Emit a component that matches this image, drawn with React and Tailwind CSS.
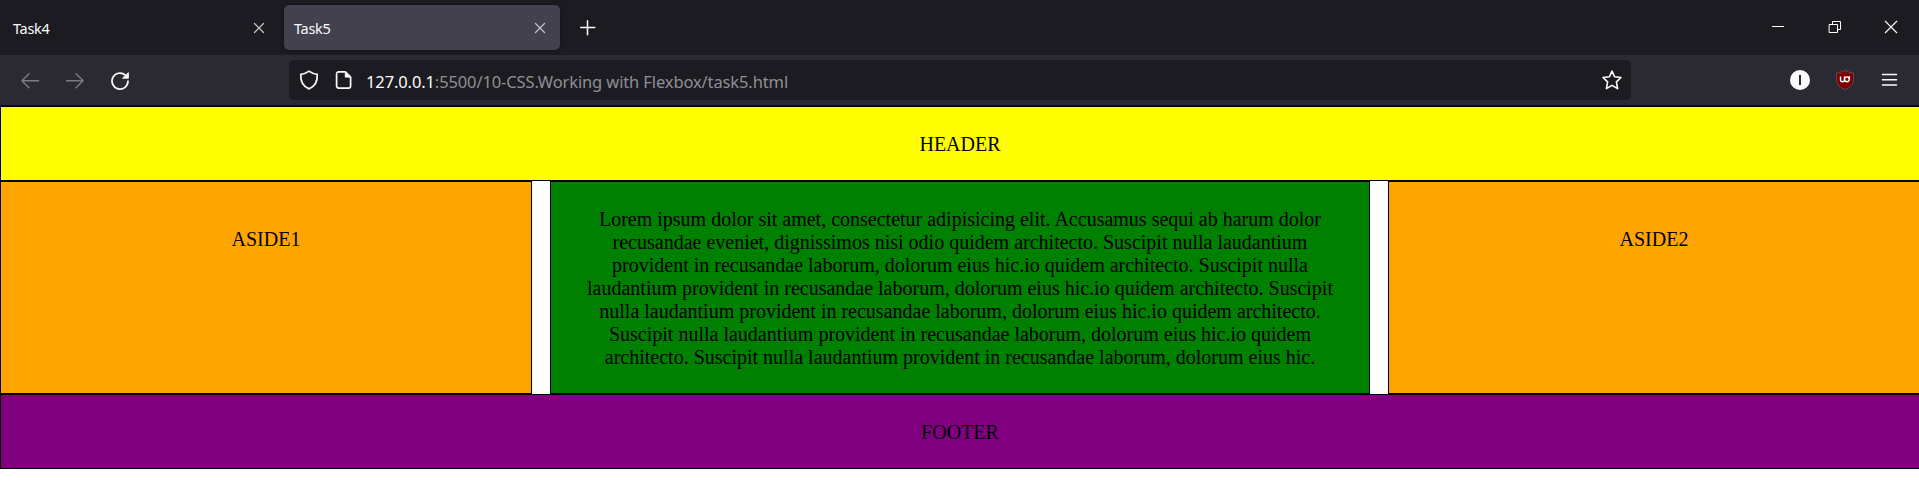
function Svg({ className, children, w = 24, h = 24, sw = 1.5 }) {
  return (
    <svg
      className={'block shrink-0 ' + className}
      width={w}
      height={h}
      viewBox={`0 0 ${w} ${h}`}
      fill="none"
      stroke="currentColor"
      strokeWidth={sw}
      strokeLinecap="round"
      strokeLinejoin="round"
    >
      {children}
    </svg>
  );
}

function TabClose() {
  return (
    <Svg w={12} h={12} sw={1.2} className="text-[#c5c5c9]">
      <path d="M1.5 1.5 10.5 10.5M10.5 1.5 1.5 10.5" />
    </Svg>
  );
}

function TabBar() {
  return (
    <div className="flex h-[55px] w-[1920px] bg-[#1c1b22] text-[14.5px] tracking-[-0.3px] text-[#fbfbfe]">
      <div className="mt-[5px] flex h-[45px] w-[284px] items-center justify-between pr-[19px] pl-[13px]">
        <span className="pt-[2px]">Task4</span>
        <TabClose />
      </div>
      <div className="mt-[5px] flex h-[45px] w-[276px] items-center justify-between rounded-[5px] bg-[#42414d] pr-[14px] pl-[10px] shadow-[0_0_4px_rgba(0,0,0,0.4)]">
        <span className="pt-[2px]">Task5</span>
        <TabClose />
      </div>
      <Svg w={16} h={16} className="mt-[20px] ml-[20px] text-[#fbfbfe]">
        <path d="M7.5 .75V14.75M.75 7.5H14.75" />
      </Svg>
      <div className="ml-auto flex pt-[20px] pr-[22px] text-white">
        <Svg w={14} h={14} sw={1} className="mr-[43px]">
          <path d="M1.5 6.5H12.5" strokeLinecap="square" />
        </Svg>
        <Svg w={14} h={14} sw={1} className="mr-[42px]">
          <path d="M1.5 4.5H9.5V12.5H1.5ZM4.5 4.5V1.5H12.5V9.5H9.5" strokeLinejoin="miter" />
        </Svg>
        <Svg w={14} h={14} sw={1.1}>
          <path d="M1 1 13 13M13 1 1 13" strokeLinecap="butt" />
        </Svg>
      </div>
    </div>
  );
}

function Toolbar() {
  return (
    <div className="flex h-[51px] w-[1920px] border-b border-[#0c0c0d] bg-[#2b2a33] text-[#fbfbfe]">
      <Svg w={20} h={18} className="mt-[17px] ml-[20px] text-[#7b7a80]">
        <path d="M18.5 8.8H2M9 1.8 1.9 8.8 9 15.8" />
      </Svg>
      <Svg w={20} h={18} className="mt-[17px] ml-[25px] text-[#7b7a80]">
        <path d="M1.5 8.8H18M11 1.8 18.1 8.8 11 15.8" />
      </Svg>
      <Svg w={20} h={20} sw={1.7} className="mt-[16px] ml-[25px]">
        <path d="M18 10A8 8 0 1 1 15.2 4" />
        <path d="M18.4 2V7.2H12.9Z" fill="currentColor" strokeWidth="0.9" />
      </Svg>
      <div className="mt-[5px] ml-[159px] flex h-[40px] w-[1342px] rounded-[5px] bg-[#1c1b22]">
        <Svg w={20} h={20} sw={1.7} className="mt-[10px] ml-[10px]">
          <path d="M10 1.1C7.5 3 4.5 4 1.8 4.3C1.4 10.5 3.5 16.2 10 18.9C16.5 16.2 18.6 10.5 18.2 4.3C15.5 4 12.5 3 10 1.1Z" />
        </Svg>
        <Svg w={18} h={20} sw={1.7} className="mt-[10px] ml-[16px]">
          <path d="M10.3 1.9H3.6A2 2 0 0 0 1.6 3.9V16.1A2 2 0 0 0 3.6 18.1H13.6A2 2 0 0 0 15.6 16.1V7.1Z" />
          <path d="M10.3 1.9V7.1H15.6Z" fill="currentColor" strokeWidth="1" />
        </Svg>
        <div className="mt-[10px] ml-[13px] text-[16.5px] leading-6 tracking-[-0.12px] whitespace-nowrap text-[#8f8f94]">
          <span className="text-[#fbfbfe]">127.0.0.1</span>:5500/10-CSS.Working with Flexbox/task5.html
        </div>
        <Svg w={20} h={20} sw={1.6} className="mt-[10px] mr-[9px] ml-auto">
          <path d="M10 1.2 12.5 6.7 19 7.5 14.4 11.9 15.6 18.6 10 15.4 4.4 18.6 5.6 11.9 1 7.5 7.5 6.7Z" />
        </Svg>
      </div>
      <div className="ml-auto flex pt-[15px] pr-[22px]">
        <svg className="mr-[26px]" width="20" height="20" viewBox="0 0 20 20">
          <circle cx="10" cy="10" r="10" fill="#fbfbfe" />
          <rect x="9" y="5" width="2" height="10" fill="#2b2a33" />
        </svg>
        <svg className="mr-[27px]" width="18" height="20" viewBox="0 0 18 20">
          <path d="M9 .4C6.6 1.8 3.5 2.7.5 2.9V9.5C.5 14.5 4 17.8 9 19.6C14 17.8 17.5 14.5 17.5 9.5V2.9C14.5 2.7 11.4 1.8 9 .4Z" fill="#800000" stroke="#5f5157" strokeWidth="0.9" />
          <path d="M4.5 6.4V9.7A2 2 0 0 0 8.5 9.7V6.4M8.5 9.3A2.4 2.4 0 1 0 13.3 9.3A2.4 2.4 0 1 0 8.5 9.3M13.3 6.2V9.3" fill="none" stroke="#fff" strokeWidth="1.4" />
        </svg>
        <Svg w={17} h={20}>
          <path d="M1.5 4.5H15.5M1.5 9.7H15.5M1.5 14.9H15.5" />
        </Svg>
      </div>
    </div>
  );
}

const box = 'border border-black px-[25px] pb-[24px] text-center';

export default function App() {
  return (
    <div className="h-[495px] w-full overflow-hidden bg-white">
      <div className="font-['Noto_Sans','Open_Sans',sans-serif]">
        <TabBar />
        <Toolbar />
      </div>
      <div className="w-[1920px] font-['Liberation_Serif',serif] text-[20px] leading-[23px] text-black">
        <header className={box + ' bg-[#ffff00] pt-[26px]'}>HEADER</header>
        <div className="flex gap-[18px]">
          <aside className={box + ' w-[532px] bg-[#ffa500] pt-[46px]'}>ASIDE1</aside>
          <main className={box + ' w-[820px] bg-[#008000] pt-[26px]'}>
            Lorem ipsum dolor sit amet, consectetur adipisicing elit. Accusamus sequi ab harum dolor
            recusandae eveniet, dignissimos nisi odio quidem architecto. Suscipit nulla laudantium
            provident in recusandae laborum, dolorum eius hic.io quidem architecto. Suscipit nulla
            laudantium provident in recusandae laborum, dolorum eius hic.io quidem architecto. Suscipit
            nulla laudantium provident in recusandae laborum, dolorum eius hic.io quidem architecto.
            Suscipit nulla laudantium provident in recusandae laborum, dolorum eius hic.io quidem
            architecto. Suscipit nulla laudantium provident in recusandae laborum, dolorum eius hic.
          </main>
          <aside className={box + ' w-[532px] bg-[#ffa500] pt-[46px]'}>ASIDE2</aside>
        </div>
        <footer className={box + ' bg-[#800080] pt-[26px]'}>FOOTER</footer>
      </div>
    </div>
  );
}
